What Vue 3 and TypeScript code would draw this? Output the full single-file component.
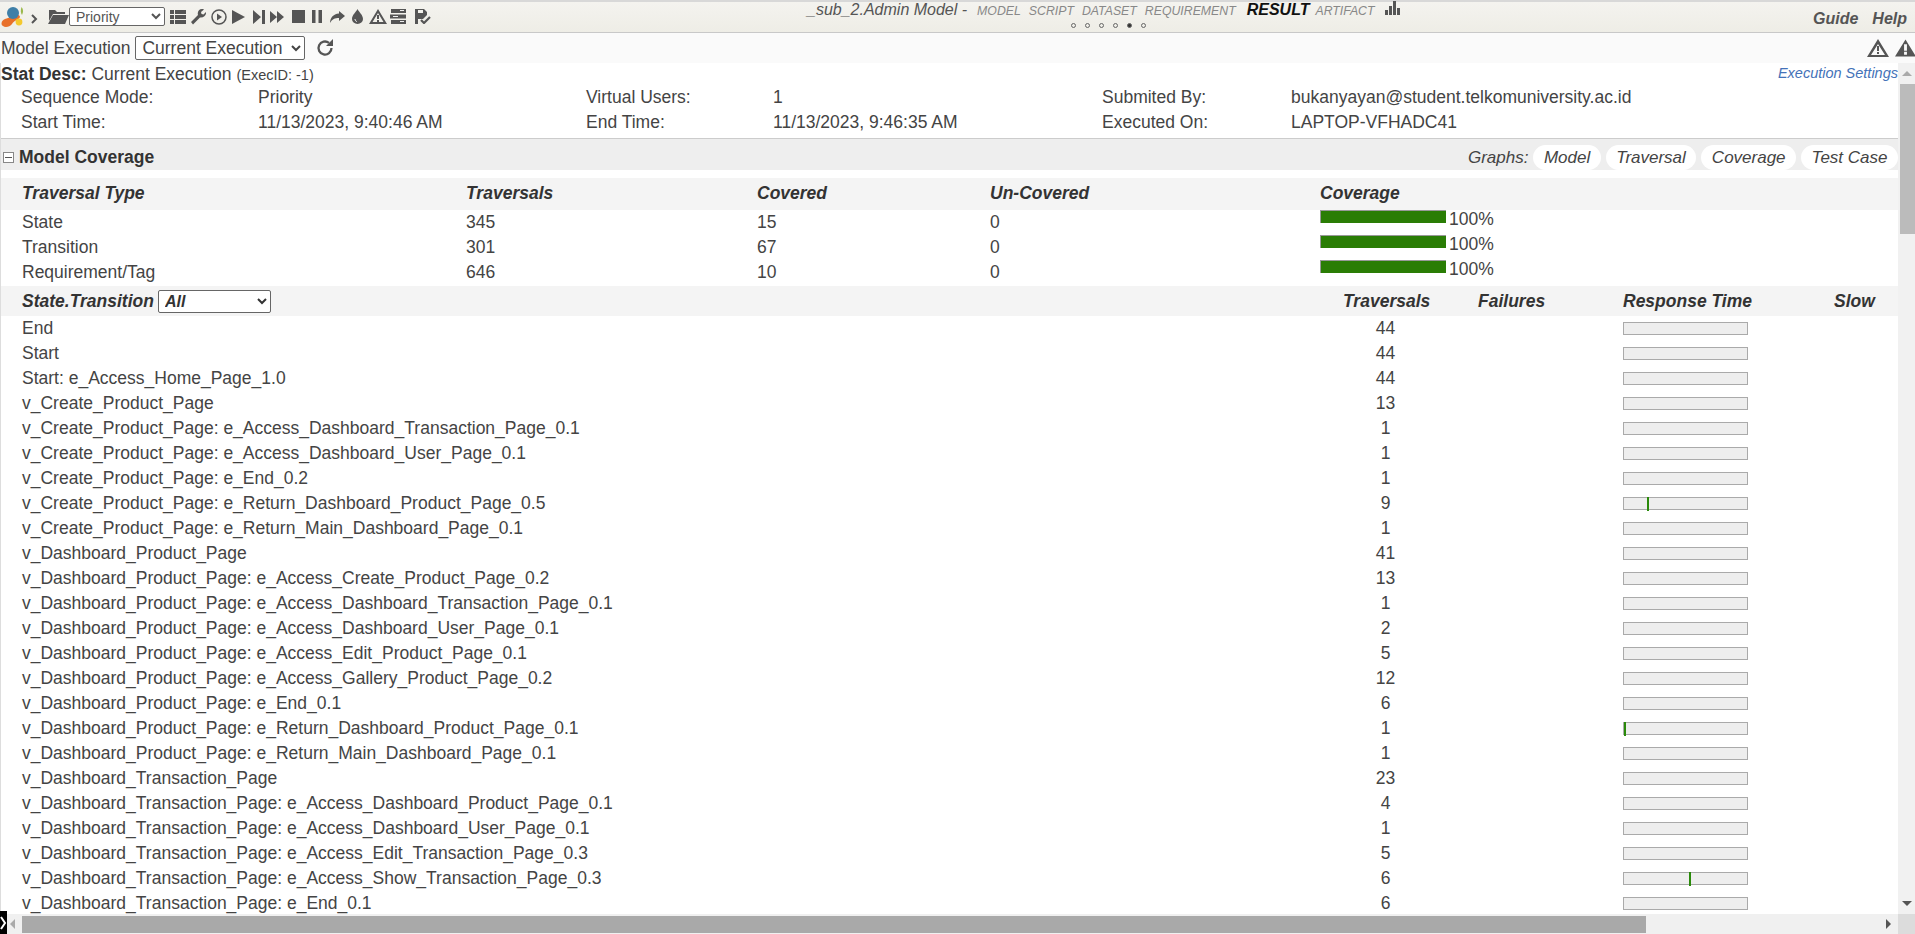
<template>
  <div class="app">
    <!-- Top toolbar -->
    <header class="topbar">
      <div class="tools">
        <svg class="logo" viewBox="0 0 24 22" width="24" height="22">
          <path d="M20.500 1c2 2 2 5 .5 8-1.500-2-1.500-5-.5-8z" fill="#9ab84a" />
          <path d="M13 9c3-1 6 0 6 2-1 3-6 3-8 7-2 3-7 4-9 2-3-2-1-6 2-7 3-1 6-2 9-4z" fill="#e8702a" />
          <circle cx="12" cy="7" r="6" fill="#3f7fa8" />
          <circle cx="18" cy="16" r="3.400" fill="#f4c92e" />
        </svg>
        <svg class="caret" viewBox="0 0 8 10" width="8" height="10"><path d="M2 1l4 4-4 4" fill="none" stroke="#555" stroke-width="2" /></svg>
        <svg class="tool folder" viewBox="0 0 21 15" width="21" height="15"><path d="M1 1h6l2 2h8v2H5L1 12zM5 6h16l-4 9H0z" fill="#555" /></svg>
        <select class="mode"><option>Priority</option></select>
        <svg class="tool" style="margin-left:5px" viewBox="0 0 16 14" width="16" height="14"><path d="M0 0h4v4H0zM5 0h11v4H5zM0 5h4v4H0zM5 5h11v4H5zM0 10h4v4H0zM5 10h11v4H5z" fill="#555" /></svg>
        <svg class="tool" style="margin-left:4px" viewBox="0 0 16 16" width="16" height="16"><path d="M1 13l7-7c-1-3 1-6 4-6 1 0 2 .3 2 .5L11 3l.5 2 2 .5L16 3c.5 3-2 6-6 5.500L3 15.500z" fill="#555" /></svg>
        <svg class="tool" style="margin-left:5px" viewBox="0 0 16 16" width="16" height="16"><circle cx="8" cy="8" r="7" fill="none" stroke="#555" stroke-width="1.500" /><path d="M6 4.500l5 3.500-5 3.500z" fill="#555" /></svg>
        <svg class="tool" style="margin-left:5px" viewBox="0 0 13 14" width="13" height="14"><path d="M0 0l13 7-13 7z" fill="#555" /></svg>
        <svg class="tool" style="margin-left:8px" viewBox="0 0 12 14" width="12" height="14"><path d="M0 0l8 7-8 7zM9 0h3v14H9z" fill="#555" /></svg>
        <svg class="tool" style="margin-left:5px" viewBox="0 0 14 12" width="14" height="12"><path d="M0 0l7 6-7 6zM7 0l7 6-7 6z" fill="#555" /></svg>
        <svg class="tool" style="margin-left:8px" viewBox="0 0 13 13" width="13" height="13"><path d="M0 0h13v13H0z" fill="#555" /></svg>
        <svg class="tool" style="margin-left:7px" viewBox="0 0 10 13" width="10" height="13"><path d="M0 0h3.500v13H0zM6.500 0H10v13H6.500z" fill="#555" /></svg>
        <svg class="tool" style="margin-left:8px" viewBox="0 0 15 12" width="15" height="12"><path d="M9 0l6 5-6 5V7C5 7 2 8 0 12c0-5 3-9 9-9.500z" fill="#555" /></svg>
        <svg class="tool" style="margin-left:7px" viewBox="0 0 11 15" width="11" height="15"><path d="M5.500 0C7 3 11 6 11 10a5.500 5 0 0 1-11 0C0 6 4 3 5.500 0z" fill="#555" /><path d="M3 10c0 1.500 1 2.500 2 2.500" stroke="#eee" fill="none" /></svg>
        <svg class="tool" style="margin-left:6px" viewBox="0 0 18 15" width="18" height="15"><path fill-rule="evenodd" d="M9 0l9 15H0zM9 4l-5.500 9h11z" fill="#555" /><path d="M8 6h2v4H8zM8 11h2v2H8z" fill="#555" /></svg>
        <svg class="tool" style="margin-left:3px" viewBox="0 0 16 15" width="16" height="15"><path d="M1 0h15v4H1zM0 5.500h16v4H0zM1 11h15v4H1z" fill="#555" /><path d="M10 1.500h4M3 7.500h5M10 12.500h4" stroke="#eee" /></svg>
        <svg class="tool" style="margin-left:9px" viewBox="0 0 16 15" width="16" height="15"><path d="M0 0h9l3 3v3L8 10H3v5H0zM3 1v3h5V1z" fill="#555" fill-rule="evenodd" /><path d="M6 11l3 3 6-6" fill="none" stroke="#555" stroke-width="2.200" /></svg>
      </div>
      <div class="nav">
        <div class="tabs">
          <span class="title">_sub_2.Admin Model -</span>
          <span class="tab" style="margin-left:10px">MODEL</span>
          <span class="tab">SCRIPT</span>
          <span class="tab">DATASET</span>
          <span class="tab">REQUIREMENT</span>
          <span class="tab-on">RESULT</span>
          <span class="tab">ARTIFACT</span>
          <svg class="chart" viewBox="0 0 16 14" width="16" height="14"><path d="M0 9h3v5H0zM4 5h3v9H4zM8 0h3v14H8zM12 7h3v7h-3z" fill="#555" /></svg>
        </div>
        <div class="dots">
          <i v-for="n in 6" :key="n" :class="{ on: n === 5 }"></i>
        </div>
      </div>
      <div class="links">
        <span>Guide</span>
        <span>Help</span>
      </div>
    </header>

    <!-- Execution picker -->
    <div class="execbar">
      <label>Model Execution</label>
      <select class="exec"><option>Current Execution</option></select>
      <svg class="refresh" viewBox="0 0 18 18" width="18" height="18"><path d="M15.500 9A6.500 6.500 0 1 1 13 3.900" fill="none" stroke="#555" stroke-width="2.300" /><path d="M17 0v7h-7z" fill="#555" /></svg>
      <div class="alerts">
        <svg viewBox="0 0 22 18" width="22" height="18"><path fill-rule="evenodd" d="M11 0l11 18H0zM11 5L4 16h14z" fill="#555" /><path d="M10 7h2v5h-2zM10 13h2v2h-2z" fill="#555" /></svg>
        <svg viewBox="0 0 22 18" width="21" height="18"><path fill-rule="evenodd" d="M11 0l11 18H0zM9.500 5v7h3V5zM9.500 13v3h3v-3z" fill="#555" /></svg>
      </div>
    </div>

    <div class="middle">
      <main class="content">
        <section class="stat">
          <div class="stat-head">
            <div><b>Stat Desc:</b> Current Execution <small>(ExecID: -1)</small></div>
            <a class="settings">Execution Settings</a>
          </div>
          <div class="stat-grid">
            <span>Sequence Mode:</span><span>Priority</span>
            <span>Virtual Users:</span><span>1</span>
            <span>Submited By:</span><span>bukanyayan@student.telkomuniversity.ac.id</span>
            <span>Start Time:</span><span>11/13/2023, 9:40:46 AM</span>
            <span>End Time:</span><span>11/13/2023, 9:46:35 AM</span>
            <span>Executed On:</span><span>LAPTOP-VFHADC41</span>
          </div>
        </section>

        <div class="panel-head">
          <div class="panel-title"><span class="minus"></span><b>Model Coverage</b></div>
          <div class="graphs">
            <em>Graphs:</em>
            <span v-for="g in graphs" :key="g" class="pill">{{ g }}</span>
          </div>
        </div>

        <div class="cov-row cov-head">
          <span>Traversal Type</span><span>Traversals</span><span>Covered</span><span>Un-Covered</span><span>Coverage</span>
        </div>
        <div v-for="c in coverage" :key="c.type" class="cov-row">
          <span>{{ c.type }}</span>
          <span>{{ c.traversals }}</span>
          <span>{{ c.covered }}</span>
          <span>0</span>
          <span class="cov-cell"><i class="cov-bar"></i>100%</span>
        </div>

        <div class="st-row st-head">
          <div class="st-name">
            <span>State.Transition</span>
            <select class="filter"><option>All</option></select>
          </div>
          <span class="num">Traversals</span>
          <span class="fail">Failures</span>
          <span>Response Time</span>
          <span class="slow">Slow</span>
        </div>
        <div class="st-list">
          <div v-for="r in rows" :key="r.name" class="st-row">
            <span>{{ r.name }}</span>
            <span class="num">{{ r.count }}</span>
            <span></span>
            <span class="resp"><i v-if="r.mark !== undefined" :style="{ left: r.mark + 'px' }"></i></span>
            <span></span>
          </div>
        </div>
      </main>

      <div class="vscroll">
        <i class="up"></i>
        <div class="vtrack"><div class="vthumb"></div></div>
        <i class="down"></i>
      </div>
    </div>

    <div class="hscroll">
      <span class="grip"><svg viewBox="0 0 7 23" width="7" height="23"><path d="M1 6l4 6-4 6" fill="none" stroke="#fff" stroke-width="2" /></svg></span>
      <i class="left"></i>
      <div class="hthumb"></div>
      <i class="right"></i>
      <div class="corner"></div>
    </div>
  </div>
</template>

<script setup lang="ts">
interface Row {
  name: string
  count: number
  mark?: number
}

const graphs = ['Model', 'Traversal', 'Coverage', 'Test Case']

const coverage = [
  { type: 'State', traversals: 345, covered: 15 },
  { type: 'Transition', traversals: 301, covered: 67 },
  { type: 'Requirement/Tag', traversals: 646, covered: 10 }
]

const rows: Row[] = [
  { name: 'End', count: 44 },
  { name: 'Start', count: 44 },
  { name: 'Start: e_Access_Home_Page_1.0', count: 44 },
  { name: 'v_Create_Product_Page', count: 13 },
  { name: 'v_Create_Product_Page: e_Access_Dashboard_Transaction_Page_0.1', count: 1 },
  { name: 'v_Create_Product_Page: e_Access_Dashboard_User_Page_0.1', count: 1 },
  { name: 'v_Create_Product_Page: e_End_0.2', count: 1 },
  { name: 'v_Create_Product_Page: e_Return_Dashboard_Product_Page_0.5', count: 9, mark: 23 },
  { name: 'v_Create_Product_Page: e_Return_Main_Dashboard_Page_0.1', count: 1 },
  { name: 'v_Dashboard_Product_Page', count: 41 },
  { name: 'v_Dashboard_Product_Page: e_Access_Create_Product_Page_0.2', count: 13 },
  { name: 'v_Dashboard_Product_Page: e_Access_Dashboard_Transaction_Page_0.1', count: 1 },
  { name: 'v_Dashboard_Product_Page: e_Access_Dashboard_User_Page_0.1', count: 2 },
  { name: 'v_Dashboard_Product_Page: e_Access_Edit_Product_Page_0.1', count: 5 },
  { name: 'v_Dashboard_Product_Page: e_Access_Gallery_Product_Page_0.2', count: 12 },
  { name: 'v_Dashboard_Product_Page: e_End_0.1', count: 6 },
  { name: 'v_Dashboard_Product_Page: e_Return_Dashboard_Product_Page_0.1', count: 1, mark: 0 },
  { name: 'v_Dashboard_Product_Page: e_Return_Main_Dashboard_Page_0.1', count: 1 },
  { name: 'v_Dashboard_Transaction_Page', count: 23 },
  { name: 'v_Dashboard_Transaction_Page: e_Access_Dashboard_Product_Page_0.1', count: 4 },
  { name: 'v_Dashboard_Transaction_Page: e_Access_Dashboard_User_Page_0.1', count: 1 },
  { name: 'v_Dashboard_Transaction_Page: e_Access_Edit_Transaction_Page_0.3', count: 5 },
  { name: 'v_Dashboard_Transaction_Page: e_Access_Show_Transaction_Page_0.3', count: 6, mark: 65 },
  { name: 'v_Dashboard_Transaction_Page: e_End_0.1', count: 6 }
]
</script>

<style>
body {
  margin: 0;
  overflow: hidden;
}
</style>

<style scoped>
.app {
  height: 934px;
  display: flex;
  flex-direction: column;
  overflow: hidden;
  font-family: "Liberation Sans", Arial, sans-serif;
  font-size: 17.500px;
  color: #444;
  background: #fff;
}

.topbar {
  height: 33px;
  box-sizing: border-box;
  flex: none;
  display: grid;
  grid-template-columns: 807px 1fr auto;
  background: linear-gradient(#f4f3ef, #eeede6);
  border-top: 2px solid #d8d8d8;
  border-bottom: 1px solid #c8c8c8;
}

.tools {
  display: flex;
  align-items: center;
  padding-left: 1px;
  padding-bottom: 1px;
}

.caret { margin: 4px 5px 0 5px; }
.tool { flex: none; }
.folder { margin-left: 5px; margin-top: -1px; }

.mode {
  width: 96px;
  height: 19px;
  padding: 0 0 0 2px;
  font: 14px "Liberation Sans", Arial, sans-serif;
  color: #555;
  background: #fff;
  border: 1px solid #666;
  border-radius: 2px;
}

.nav { display: flex; flex-direction: column; }

.tabs {
  display: flex;
  align-items: baseline;
  height: 14px;
  margin-top: -1px;
  font-style: italic;
  white-space: nowrap;
}

.title { color: #555; font-size: 16px; line-height: 15px; }

.tab {
  margin-right: 8px;
  font-size: 12.300px;
  color: #888;
}

.tab:nth-of-type(5) { margin-right: 10px; }

.tab-on {
  margin: 0 6px 0 1px;
  font-size: 16px;
  font-weight: bold;
  color: #111;
}

.chart { align-self: flex-start; margin: 0 0 0 3px; }

.dots {
  display: flex;
  gap: 9px;
  margin: 8px 0 0 264px;
}

.dots i {
  width: 3px;
  height: 3px;
  border: 1px solid #666;
  border-radius: 50%;
}

.dots i.on { background: #333; }

.links {
  display: flex;
  gap: 14px;
  align-items: center;
  padding: 3px 8px 0 0;
  font-weight: bold;
  font-style: italic;
  font-size: 16px;
  color: #555;
}

.execbar {
  height: 30px;
  flex: none;
  display: flex;
  align-items: center;
  padding-left: 1px;
  background: #fafafa;
}

.exec {
  width: 170px;
  height: 24px;
  margin-left: 5px;
  padding: 0 0 0 2px;
  font: 17.500px "Liberation Sans", Arial, sans-serif;
  color: #444;
  background: #fff;
  border: 1px solid #666;
  border-radius: 2px;
}

.refresh { margin-left: 11px; }

.alerts {
  margin-left: auto;
  display: flex;
  gap: 6px;
  margin-right: -1px;
}

.middle {
  flex: 1;
  min-height: 0;
  display: flex;
}

.content {
  flex: 1;
  min-width: 0;
  overflow: hidden;
  border-left: 1px solid #ddd;
}

.stat {
  height: 76px;
  box-sizing: border-box;
  border-bottom: 1px solid #ccc;
}

.stat-head {
  display: flex;
  justify-content: space-between;
  height: 22px;
  line-height: 23px;
  white-space: nowrap;
}

.stat-head b { color: #333; }
.stat-head small { font-size: 14.500px; }

.settings {
  font-size: 14.500px;
  font-style: italic;
  color: #4472b8;
  line-height: 20px;
}

.stat-grid {
  display: grid;
  grid-template-columns: 237px 328px 187px 329px 189px 1fr;
  grid-auto-rows: 25px;
  padding-left: 20px;
  line-height: 25px;
}

.panel-head {
  height: 31px;
  display: flex;
  justify-content: space-between;
  background: #eee;
}

.panel-title {
  display: flex;
  align-items: center;
  gap: 5px;
  padding: 6px 0 0 2px;
}

.panel-title b { color: #333; }

.minus {
  position: relative;
  width: 9px;
  height: 9px;
  margin-top: -1px;
  border: 1px solid #888;
  background: #fff;
}

.minus::after {
  content: "";
  position: absolute;
  left: 1px;
  right: 1px;
  top: 4px;
  height: 1px;
  background: #555;
}

.graphs {
  display: flex;
  align-items: flex-end;
  gap: 5px;
  font-size: 17px;
  font-style: italic;
}

.graphs em { line-height: 25px; }

.pill {
  height: 25px;
  line-height: 25px;
  padding: 0 10.500px;
  background: #fff;
  border-radius: 13px;
  color: #444;
}

.cov-row {
  display: grid;
  grid-template-columns: 444px 291px 233px 330px 1fr;
  height: 25px;
  line-height: 25px;
  padding-left: 21px;
}

.cov-row > span { position: relative; }

.cov-head {
  height: 32px;
  line-height: 30px;
  margin-top: 8px;
  background: #f4f4f4;
  font-weight: bold;
  font-style: italic;
  color: #333;
}

.cov-cell {
  display: flex;
  top: -3px;
}

.cov-bar {
  align-self: flex-start;
  width: 125px;
  height: 12px;
  margin: 3px 3px 0 0;
  background: #2a7d05;
  border-top: 1px solid #999;
  border-left: 1px solid #999;
}

.st-row {
  display: grid;
  grid-template-columns: 1321px 85px 195px 211px 1fr;
  height: 25px;
  line-height: 25px;
  padding-left: 21px;
  white-space: nowrap;
}

.st-head {
  height: 30px;
  line-height: 30px;
  margin-top: 1px;
  background: #f4f4f4;
  font-weight: bold;
  font-style: italic;
  color: #333;
}

.st-name {
  display: flex;
  align-items: center;
  gap: 4px;
}

.filter {
  width: 113px;
  height: 23px;
  padding: 0 0 0 2px;
  font: italic bold 16px "Liberation Sans", Arial, sans-serif;
  color: #333;
  background: #fff;
  border: 1px solid #666;
  border-radius: 2px;
}

.num { text-align: center; }
.fail { padding-left: 50px; }

.resp {
  position: relative;
  align-self: center;
  width: 125px;
  height: 13px;
  box-sizing: border-box;
  background: #eee;
  border: 1px solid #aaa;
}

.resp i {
  position: absolute;
  top: -1px;
  bottom: -2px;
  width: 2px;
  background: #2a8a0a;
}

.vscroll {
  width: 17px;
  flex: none;
  display: flex;
  flex-direction: column;
  align-items: center;
  background: #f1f1f1;
}

.vtrack { flex: 1; width: 100%; }

.vthumb {
  width: 15px;
  height: 150px;
  margin: 0 0 0 2px;
  background: #bbb;
}

.up, .down {
  width: 0;
  height: 0;
  border-left: 5px solid transparent;
  border-right: 5px solid transparent;
}

.up {
  margin: 8px 0 8px;
  border-bottom: 5px solid #aaa;
}

.down {
  margin: 8px 0 8px;
  border-top: 5px solid #555;
}

.hscroll {
  position: relative;
  height: 20px;
  flex: none;
  display: flex;
  align-items: center;
  background: #f0f0f0;
}

.grip {
  position: absolute;
  left: 0;
  bottom: 0;
  width: 7px;
  height: 23px;
  background: #000;
}

.left, .right {
  width: 0;
  height: 0;
  border-top: 5px solid transparent;
  border-bottom: 5px solid transparent;
}

.left {
  margin-left: 10px;
  border-right: 5px solid #aaa;
}

.hthumb {
  width: 1624px;
  height: 17px;
  margin-left: 7px;
  background: #a9a9a9;
}

.right {
  margin-left: 240px;
  border-left: 5px solid #555;
}

.corner {
  margin-left: auto;
  width: 17px;
  height: 100%;
  background: #dcdcdc;
}
</style>
